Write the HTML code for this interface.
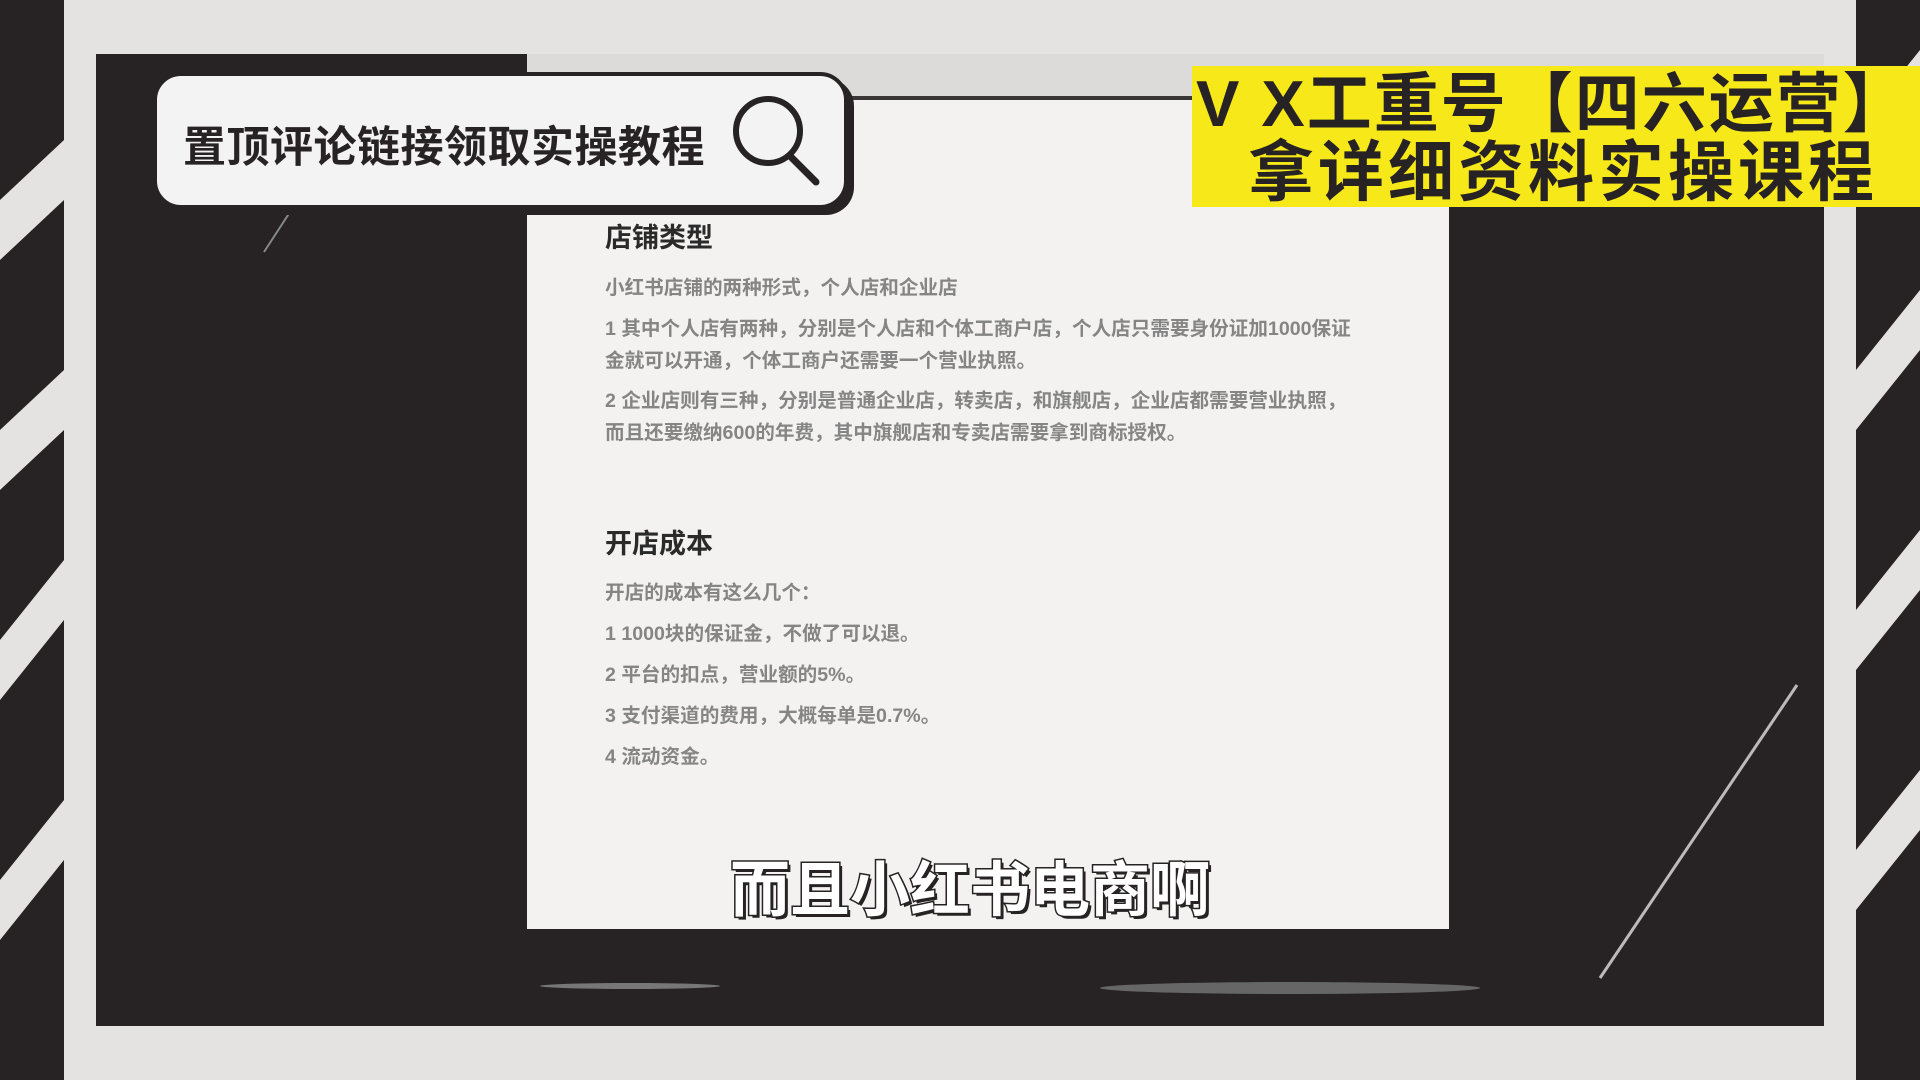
<!DOCTYPE html>
<html><head><meta charset="utf-8"><style>
*{margin:0;padding:0;box-sizing:border-box}
body{width:1920px;height:1080px;overflow:hidden;background:#e4e3e2;position:relative;font-family:"Liberation Sans","Noto Sans CJK SC",sans-serif}
.abs{position:absolute}
.panel{left:96px;top:54px;width:1728px;height:972px;background:#272223}
.doc{left:527px;top:100px;width:922px;height:829px;background:#f3f2f1}
.doctop{left:527px;top:54px;width:1297px;height:46px;background:#dcdbda;border-bottom:4px solid #3a3536}
.search{left:153px;top:72px;width:695px;height:137px;background:#f3f3f3;border:4px solid #272223;border-radius:28px;box-shadow:6px 6px 0 #272223}
.search span{position:absolute;left:26px;top:37px;font-size:43px;font-weight:bold;color:#272223;letter-spacing:0.5px;white-space:nowrap}
.yellow{left:1192px;top:66px;width:728px;height:141px;background:#f7e81a;color:#272223;font-weight:bold;white-space:nowrap}
.h{position:absolute;left:605px;font-size:27px;font-weight:bold;color:#2a2a2a}
.p{position:absolute;left:605px;font-size:19.6px;color:#858585;white-space:nowrap;font-weight:bold}
.sub{left:0;width:1940px;text-align:center;top:842px;font-size:60px;font-weight:bold;color:#fff;-webkit-text-stroke:3px #272223;paint-order:stroke fill;text-shadow:3px 3px 0 #272223}
</style></head><body>
<svg class="abs" style="left:0;top:0" width="1920" height="1080">
<rect x="0" y="0" width="64" height="1080" fill="#272223"/>
<rect x="1856" y="0" width="64" height="1080" fill="#272223"/>
<g fill="#e4e3e2">
<polygon points="0,200 64,140 64,200 0,260"/>
<polygon points="0,430 64,370 64,430 0,490"/>
<polygon points="0,640 64,560 64,620 0,700"/>
<polygon points="0,880 64,800 64,860 0,940"/>
<polygon points="1856,130 1920,50 1920,110 1856,190"/>
<polygon points="1856,370 1920,290 1920,350 1856,430"/>
<polygon points="1856,610 1920,530 1920,590 1856,670"/>
<polygon points="1856,850 1920,770 1920,830 1856,910"/>
</g>
</svg>
<div class="abs panel"></div>
<div class="abs doctop"></div>
<div class="abs doc"></div>
<svg class="abs" style="left:0;top:0" width="1920" height="1080">
<line x1="1797" y1="685" x2="1600" y2="978" stroke="#bbb" stroke-width="3"/>
<line x1="290" y1="212" x2="264" y2="252" stroke="#888" stroke-width="2"/>
<ellipse cx="630" cy="986" rx="90" ry="3" fill="#777"/>
<ellipse cx="1290" cy="988" rx="190" ry="6" fill="#666"/>
</svg>
<div class="abs search"><span>置顶评论链接领取实操教程</span>
<svg style="position:absolute;left:575px;top:18px" width="90" height="95"><circle cx="36" cy="37" r="32" fill="none" stroke="#272223" stroke-width="6"/><line x1="58" y1="62" x2="84" y2="88" stroke="#272223" stroke-width="7" stroke-linecap="round"/></svg>
</div>
<div class="abs yellow">
<div style="position:absolute;left:4px;top:0px;font-size:65px;line-height:76px;letter-spacing:2px">V X工重号【四六运营】</div>
<div style="position:absolute;left:56px;top:70px;font-size:66px;line-height:72px;letter-spacing:4px">拿详细资料实操课程</div>
</div>
<div class="h" style="top:216px">店铺类型</div>
<div class="p" style="top:271px">小红书店铺的两种形式，个人店和企业店</div>
<div class="p" style="top:312px">1 其中个人店有两种，分别是个人店和个体工商户店，个人店只需要身份证加1000保证</div>
<div class="p" style="top:344px">金就可以开通，个体工商户还需要一个营业执照。</div>
<div class="p" style="top:384px">2 企业店则有三种，分别是普通企业店，转卖店，和旗舰店，企业店都需要营业执照，</div>
<div class="p" style="top:416px">而且还要缴纳600的年费，其中旗舰店和专卖店需要拿到商标授权。</div>
<div class="h" style="top:522px">开店成本</div>
<div class="p" style="top:576px">开店的成本有这么几个：</div>
<div class="p" style="top:617px">1 1000块的保证金，不做了可以退。</div>
<div class="p" style="top:658px">2 平台的扣点，营业额的5%。</div>
<div class="p" style="top:699px">3 支付渠道的费用，大概每单是0.7%。</div>
<div class="p" style="top:740px">4 流动资金。</div>
<div class="abs sub">而且小红书电商啊</div>
</body></html>
